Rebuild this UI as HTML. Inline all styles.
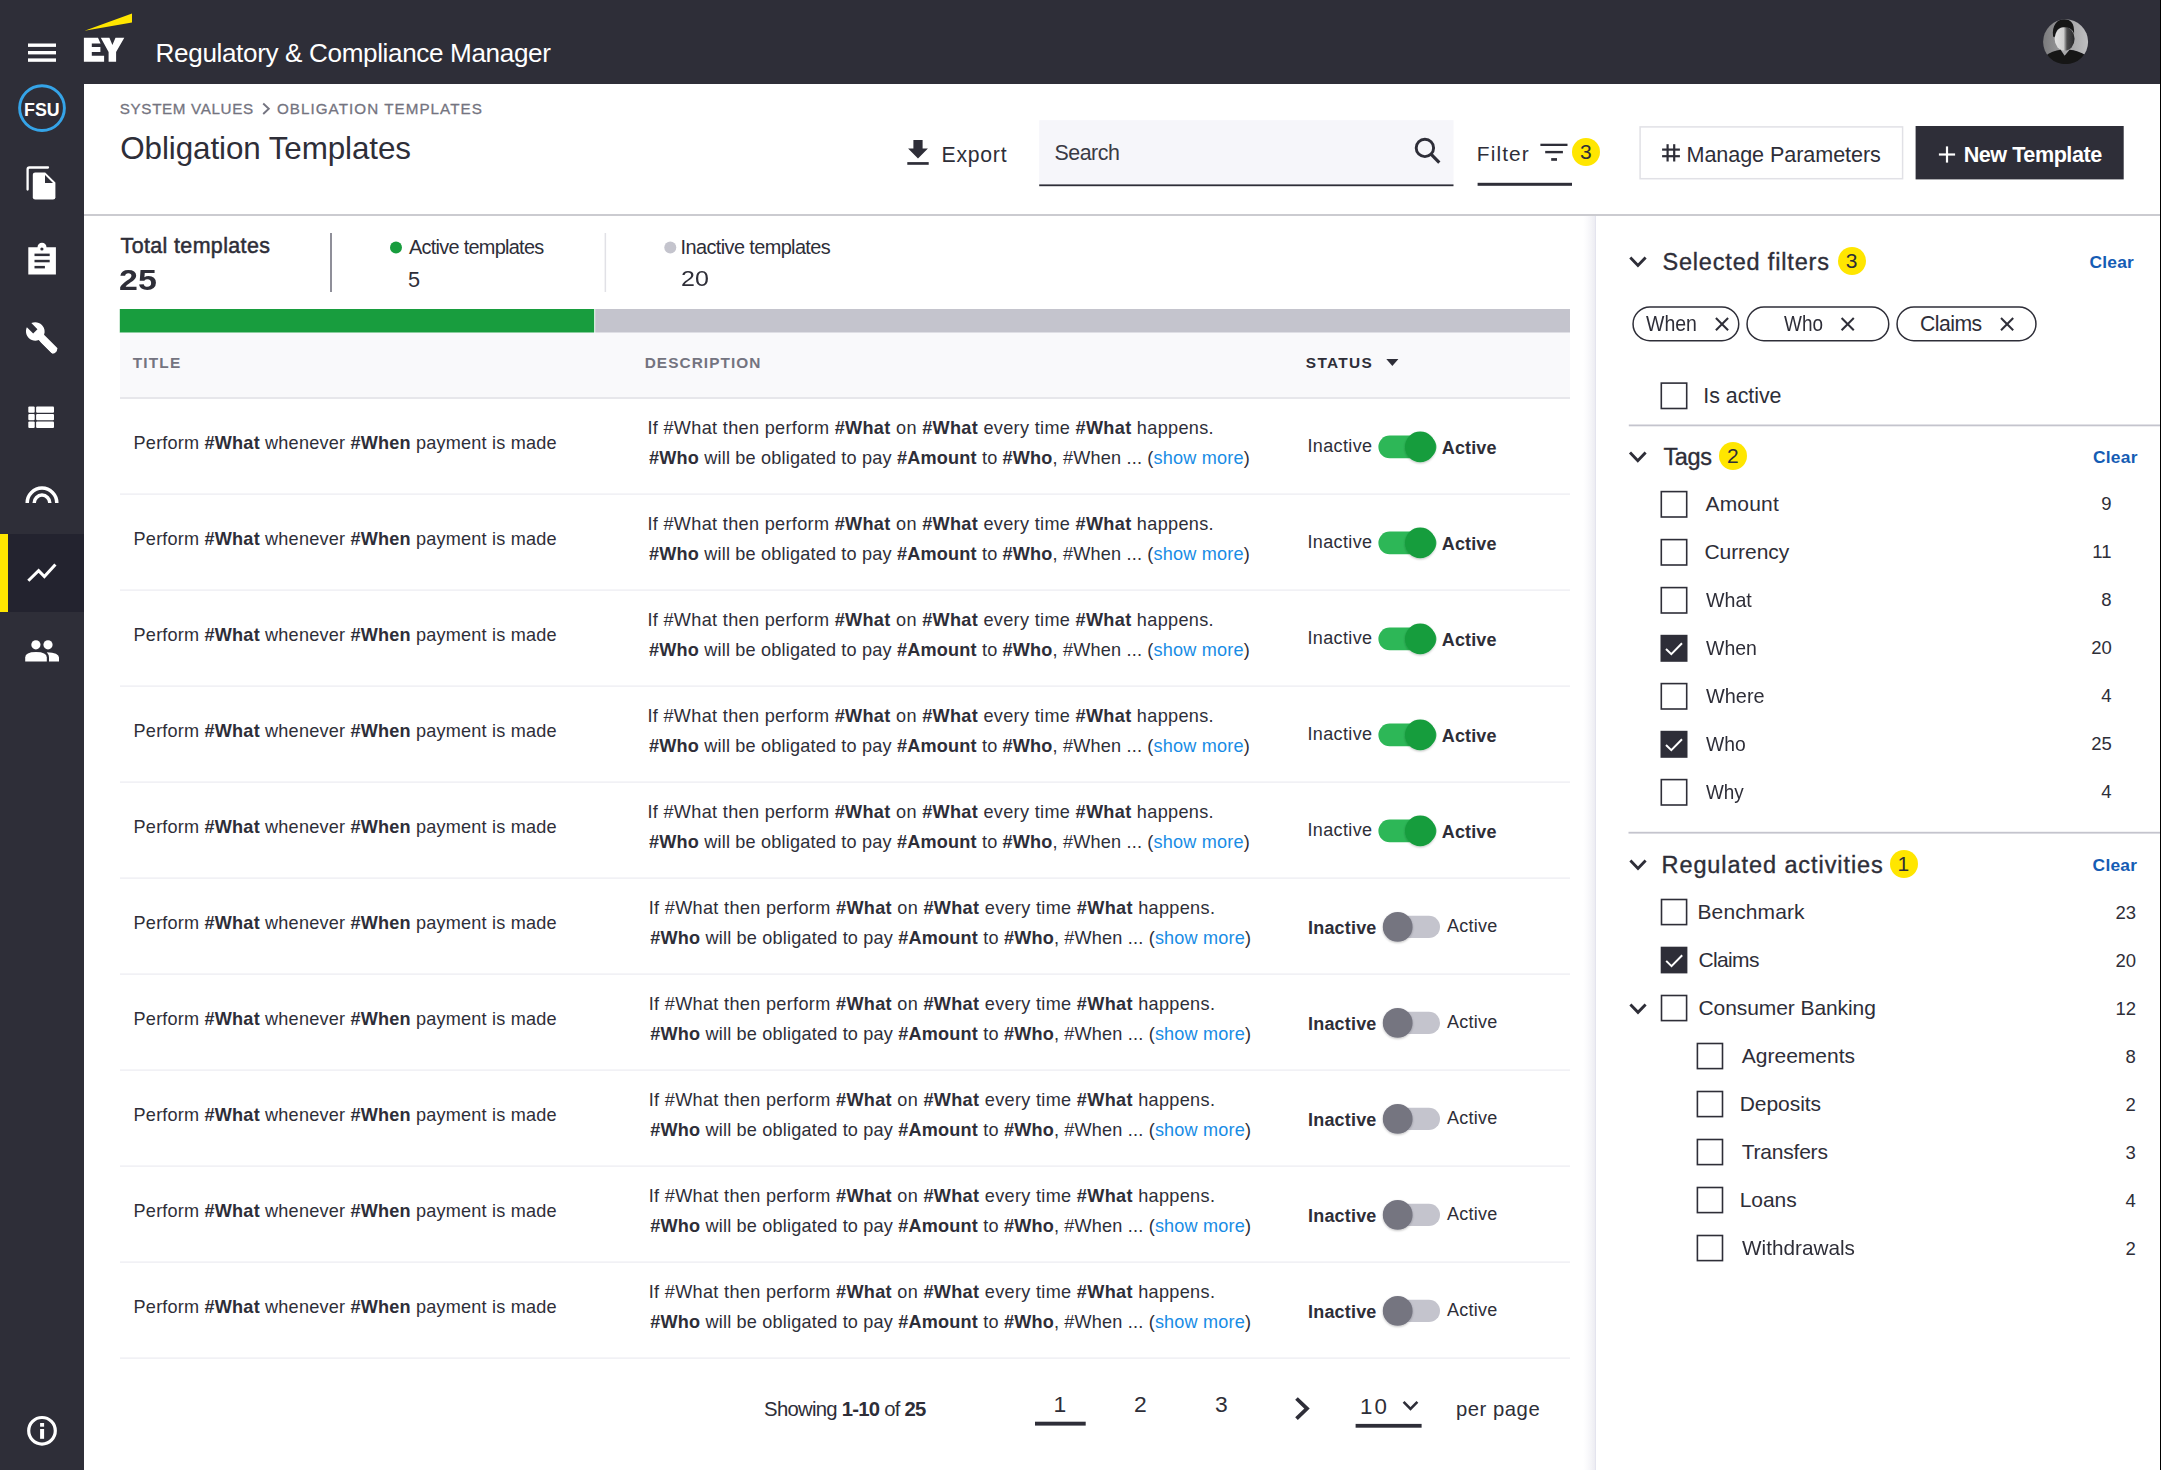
<!DOCTYPE html>
<html><head><meta charset="utf-8"><title>Obligation Templates</title>
<style>
*{margin:0;padding:0;box-sizing:border-box}
html,body{width:2161px;height:1470px;overflow:hidden;background:#fff}
body{font-family:"Liberation Sans",sans-serif;color:#2e2e38;position:relative}
.t{position:absolute;white-space:nowrap;line-height:normal}
b{font-weight:700}
svg{position:absolute;left:0;top:0}
</style></head><body>
<svg width="2161" height="1470" viewBox="0 0 2161 1470"><rect x="0" y="0" width="2161" height="84" fill="#2e2e38"/><rect x="0" y="0" width="84" height="1470" fill="#2e2e38"/><rect x="2160" y="0" width="1" height="1470" fill="#000"/><rect x="84" y="214" width="2076" height="2" fill="#cbcbd0"/><defs><linearGradient id="psh" x1="0" x2="1"><stop offset="0" stop-color="#f4f4f8" stop-opacity="0"/><stop offset="1" stop-color="#ececf2" stop-opacity="1"/></linearGradient></defs><rect x="1583" y="216" width="12" height="1254" fill="url(#psh)"/><rect x="1595" y="216" width="1" height="1254" fill="#e4e4ee"/><rect x="28" y="43.5" width="28" height="3.4" fill="#fff"/><rect x="28" y="51" width="28" height="3.4" fill="#fff"/><rect x="28" y="58.4" width="28" height="3.4" fill="#fff"/><polygon points="84.6,30.8 132,13.6 132,22.5" fill="#ffe600"/><path d="M83.9 37.8 H98 L100.6 43.5 H91.8 V47.1 H100.4 V52 H91.8 V55.7 H104.1 V61.8 H83.9 Z" fill="#fff"/><path d="M100.8 37.8 H109.4 L112.4 45.1 L115.5 37.8 H124.3 L116.1 52 V61.8 H108.6 V52 Z" fill="#fff"/><defs><clipPath id="avc"><circle cx="23" cy="23" r="22.5"/></clipPath>
<linearGradient id="avg" x1="0" x2="1"><stop offset="0" stop-color="#7a7a7c"/><stop offset="0.6" stop-color="#a6a6a8"/><stop offset="1" stop-color="#c0c0c2"/></linearGradient></defs>
<filter id="avb"><feGaussianBlur stdDeviation="0.45"/></filter><g clip-path="url(#avc)" transform="translate(2042.6,18.8)"><g filter="url(#avb)">
<rect width="46" height="46" fill="url(#avg)"/>
<path d="M19 26 L26 26 L27 36 L18 36Z" fill="#a8a8aa"/>
<linearGradient id="fcg" x1="0" x2="1"><stop offset="0" stop-color="#e2e2e2"/><stop offset="0.45" stop-color="#cfcfcf"/><stop offset="0.62" stop-color="#4a4a4c"/><stop offset="1" stop-color="#262628"/></linearGradient><ellipse cx="22" cy="20" rx="10" ry="11.8" fill="url(#fcg)"/>
<path d="M10.5 18 C9 6 15 0.5 21.5 0.5 C28 0.5 32 4 31.5 15 L30 12 C28 9.5 25 8.5 22 8.5 C17 8.5 13.5 10 12.3 18 Z" fill="#141416"/>
<path d="M2 38 C7 33.5 13 31.5 18 31 L22 37 L27 31 C32 31.5 38 33 44 37 V46 H2 Z" fill="#121214"/>
</g></g><circle cx="42" cy="108.1" r="22.4" fill="none" stroke="#35a4e8" stroke-width="2.9"/><text x="41.8" y="115.7" font-family="Liberation Sans" font-weight="700" font-size="17.8" fill="#fff" text-anchor="middle">FSU</text><path d="M48 167.5 H29.5 Q27.6 167.5 27.6 169.5 V189.5" fill="none" stroke="#fff" stroke-width="2.3" stroke-linecap="round"/><path d="M35.2 172.4 H45.2 L55.4 182.5 V197.2 Q55.4 199.6 53 199.6 H35.2 Q32.8 199.6 32.8 197.2 V174.8 Q32.8 172.4 35.2 172.4Z" fill="#fff"/><path d="M45 175 V183 H53Z" fill="#2e2e38"/><path d="M28.3 247.2 H37.5 A4.5 4.5 0 0 1 46.5 247.2 H55.9 V274.4 H28.3Z" fill="#fff"/><circle cx="41.9" cy="249" r="1.6" fill="#2e2e38"/><rect x="34.5" y="253.6" width="15.2" height="2.5" fill="#2e2e38"/><rect x="34.5" y="259.8" width="15.2" height="2.5" fill="#2e2e38"/><rect x="34.5" y="265.9" width="10.4" height="2.5" fill="#2e2e38"/><g transform="translate(24.6,320.6) scale(1.43)"><path d="M22.7 19l-9.1-9.1c.9-2.3.4-5-1.5-6.9-2-2-5-2.4-7.4-1.3L9 6 6 9 1.6 4.7C.4 7.1.9 10.1 2.9 12.1c1.9 1.9 4.6 2.4 6.9 1.5l9.1 9.1c.4.4 1 .4 1.4 0l2.3-2.3c.5-.4.5-1.1.1-1.4z" fill="#fff"/></g><line x1="44" y1="340.6" x2="53.3" y2="349.9" stroke="#fff" stroke-width="7" stroke-linecap="round"/><rect x="28.3" y="406.4" width="6.4" height="6.3" rx="1" fill="#fff"/><rect x="36.1" y="406.4" width="17.9" height="6.3" rx="1" fill="#fff"/><rect x="28.3" y="414.0" width="6.4" height="6.3" rx="1" fill="#fff"/><rect x="36.1" y="414.0" width="17.9" height="6.3" rx="1" fill="#fff"/><rect x="28.3" y="421.6" width="6.4" height="6.3" rx="1" fill="#fff"/><rect x="36.1" y="421.6" width="17.9" height="6.3" rx="1" fill="#fff"/><path d="M27.2 502.9 A14.8 14.8 0 0 1 56.8 502.9" fill="none" stroke="#fff" stroke-width="3.5"/><path d="M34.2 502.9 A7.8 7.8 0 0 1 49.8 502.9" fill="none" stroke="#fff" stroke-width="3.5"/><rect x="0" y="534" width="84" height="78" fill="#23232f"/><rect x="0" y="534" width="8" height="78" fill="#ffe600"/><polyline points="28.3,580.8 38.6,570.6 44.4,576.6 55.4,564.4" fill="none" stroke="#fff" stroke-width="3"/><circle cx="35.9" cy="644.8" r="4.6" fill="#fff"/><circle cx="48" cy="644.8" r="4.6" fill="#fff"/><path d="M25.2 661.6 V657.5 Q25.2 652 36 652 Q46.8 652 46.8 657.5 V661.6Z" fill="#fff"/><path d="M49 661.6 V657.5 Q49 654.5 46.8 652.2 Q59 652.8 59 657.5 V661.6Z" fill="#fff"/><circle cx="42" cy="1430.8" r="13.3" fill="none" stroke="#fff" stroke-width="3.2"/><rect x="40.1" y="1423" width="4" height="3.7" fill="#fff"/><rect x="40.1" y="1429" width="4" height="9.8" fill="#fff"/><polyline points="263.2,103.5 268.8,108.8 263.2,114" fill="none" stroke="#747480" stroke-width="1.9"/><path d="M913.4 140 H922.6 V148.5 H927.9 L918 158.4 L908.1 148.5 H913.4Z" fill="#2e2e38"/><rect x="907.3" y="162.1" width="21.4" height="2.7" fill="#2e2e38"/><rect x="1039.2" y="120.2" width="414.3" height="64.6" fill="#f6f6fa"/><rect x="1039.2" y="184.4" width="414.3" height="1.8" fill="#2e2e38"/><circle cx="1424.9" cy="147.9" r="8.7" fill="none" stroke="#2e2e38" stroke-width="2.9"/><line x1="1431" y1="154.2" x2="1439.3" y2="162.6" stroke="#2e2e38" stroke-width="3.2"/><rect x="1540.4" y="143.7" width="27.1" height="2.3" fill="#2e2e38"/><rect x="1545.2" y="150.9" width="17.7" height="2.4" fill="#2e2e38"/><rect x="1551.2" y="158.1" width="5.8" height="2.7" fill="#2e2e38"/><rect x="1477.6" y="182.8" width="94.4" height="3" fill="#2e2e38"/><rect x="1640.1" y="126.9" width="262.5" height="51.8" fill="#fff" stroke="#e1e1e6" stroke-width="1.5"/><g stroke="#2e2e38" stroke-width="2.2"><line x1="1667.6" y1="144.2" x2="1667.6" y2="161.5"/><line x1="1674.2" y1="144.2" x2="1674.2" y2="161.5"/><line x1="1662.1" y1="149.6" x2="1679.9" y2="149.6"/><line x1="1662.1" y1="156.2" x2="1679.9" y2="156.2"/></g><rect x="1915.6" y="126" width="208.1" height="53.4" fill="#2e2e38"/><g stroke="#fff" stroke-width="2.2"><line x1="1938.9" y1="154.5" x2="1955.1" y2="154.5"/><line x1="1947" y1="146.4" x2="1947" y2="162.6"/></g><rect x="330.2" y="233" width="1.6" height="59" fill="#747480"/><rect x="604.6" y="233" width="1.5" height="59" fill="#e1e1e6"/><circle cx="396" cy="247.4" r="6" fill="#189d3e"/><circle cx="670.3" cy="247.4" r="6" fill="#c4c4cd"/><rect x="119.8" y="309" width="474.4" height="23.7" fill="#189d3e"/><rect x="595.2" y="309" width="974.8" height="23.7" fill="#c4c4cd"/><rect x="120" y="332.7" width="1450" height="64.5" fill="#f9f9fb"/><rect x="120" y="397.2" width="1450" height="1.6" fill="#e1e1e6"/><polygon points="1386.3,359 1398.4,359 1392.35,366" fill="#2e2e38"/><defs><filter id="ksh" x="-50%" y="-50%" width="200%" height="200%"><feDropShadow dx="0" dy="1" stdDeviation="1.2" flood-color="#000" flood-opacity="0.25"/></filter></defs><rect x="120" y="493.5" width="1450" height="1.2" fill="#ececf1"/><rect x="1378.4" y="435.59999999999997" width="58" height="22.6" rx="11.3" fill="#2db757"/><circle cx="1420.2" cy="446.9" r="15.3" fill="#189d3e" filter="url(#ksh)"/><rect x="120" y="589.5" width="1450" height="1.2" fill="#ececf1"/><rect x="1378.4" y="531.6" width="58" height="22.6" rx="11.3" fill="#2db757"/><circle cx="1420.2" cy="542.9" r="15.3" fill="#189d3e" filter="url(#ksh)"/><rect x="120" y="685.5" width="1450" height="1.2" fill="#ececf1"/><rect x="1378.4" y="627.6" width="58" height="22.6" rx="11.3" fill="#2db757"/><circle cx="1420.2" cy="638.9" r="15.3" fill="#189d3e" filter="url(#ksh)"/><rect x="120" y="781.5" width="1450" height="1.2" fill="#ececf1"/><rect x="1378.4" y="723.6" width="58" height="22.6" rx="11.3" fill="#2db757"/><circle cx="1420.2" cy="734.9" r="15.3" fill="#189d3e" filter="url(#ksh)"/><rect x="120" y="877.5" width="1450" height="1.2" fill="#ececf1"/><rect x="1378.4" y="819.6" width="58" height="22.6" rx="11.3" fill="#2db757"/><circle cx="1420.2" cy="830.9" r="15.3" fill="#189d3e" filter="url(#ksh)"/><rect x="120" y="973.5" width="1450" height="1.2" fill="#ececf1"/><rect x="1383" y="915.8" width="57" height="22.2" rx="11.1" fill="#c4c4cd"/><circle cx="1397.7" cy="926.9" r="14.9" fill="#747480" filter="url(#ksh)"/><rect x="120" y="1069.5" width="1450" height="1.2" fill="#ececf1"/><rect x="1383" y="1011.8" width="57" height="22.2" rx="11.1" fill="#c4c4cd"/><circle cx="1397.7" cy="1022.9" r="14.9" fill="#747480" filter="url(#ksh)"/><rect x="120" y="1165.5" width="1450" height="1.2" fill="#ececf1"/><rect x="1383" y="1107.8000000000002" width="57" height="22.2" rx="11.1" fill="#c4c4cd"/><circle cx="1397.7" cy="1118.9" r="14.9" fill="#747480" filter="url(#ksh)"/><rect x="120" y="1261.5" width="1450" height="1.2" fill="#ececf1"/><rect x="1383" y="1203.8000000000002" width="57" height="22.2" rx="11.1" fill="#c4c4cd"/><circle cx="1397.7" cy="1214.9" r="14.9" fill="#747480" filter="url(#ksh)"/><rect x="120" y="1357.5" width="1450" height="1.2" fill="#ececf1"/><rect x="1383" y="1299.8000000000002" width="57" height="22.2" rx="11.1" fill="#c4c4cd"/><circle cx="1397.7" cy="1310.9" r="14.9" fill="#747480" filter="url(#ksh)"/><rect x="1035" y="1421.7" width="50.7" height="3.9" fill="#2e2e38"/><polyline points="1296.5,1398.5 1307,1408.6 1296.5,1418.7" fill="none" stroke="#2e2e38" stroke-width="3.8"/><polyline points="1403.6,1401.8 1410.5,1408.8 1417.4,1401.8" fill="none" stroke="#2e2e38" stroke-width="2.6"/><rect x="1355.6" y="1423.9" width="66" height="3.8" fill="#2e2e38"/><polyline points="1630.3,257.4 1637.9499999999998,265.4 1645.6,257.4" fill="none" stroke="#2e2e38" stroke-width="2.9"/><polyline points="1630.0,452.4 1637.8,460.7 1645.6,452.4" fill="none" stroke="#2e2e38" stroke-width="2.9"/><polyline points="1630.4,860.6 1638.0,868.4000000000001 1645.6,860.6" fill="none" stroke="#2e2e38" stroke-width="2.9"/><polyline points="1630.4,1004.5 1638.0,1012.3000000000001 1645.6,1004.5" fill="none" stroke="#2e2e38" stroke-width="2.9"/><rect x="1633.05" y="307.05" width="105.70000000000005" height="33.7" rx="16.85" fill="none" stroke="#2e2e38" stroke-width="1.5"/><g stroke="#2e2e38" stroke-width="2"><line x1="1715.9" y1="318" x2="1728.1000000000001" y2="330.2"/><line x1="1728.1000000000001" y1="318" x2="1715.9" y2="330.2"/></g><rect x="1747.05" y="307.05" width="141.70000000000005" height="33.7" rx="16.85" fill="none" stroke="#2e2e38" stroke-width="1.5"/><g stroke="#2e2e38" stroke-width="2"><line x1="1841.6000000000001" y1="318" x2="1853.8000000000002" y2="330.2"/><line x1="1853.8000000000002" y1="318" x2="1841.6000000000001" y2="330.2"/></g><rect x="1897.05" y="307.05" width="138.9000000000001" height="33.7" rx="16.85" fill="none" stroke="#2e2e38" stroke-width="1.5"/><g stroke="#2e2e38" stroke-width="2"><line x1="2001.0" y1="318" x2="2013.2" y2="330.2"/><line x1="2013.2" y1="318" x2="2001.0" y2="330.2"/></g><rect x="1661.3" y="383.1" width="25.4" height="25.4" fill="none" stroke="#2e2e38" stroke-width="1.6"/><rect x="1628.8" y="424.5" width="531.2" height="1.8" fill="#c4c4cd"/><rect x="1661.3" y="491.6" width="25.4" height="25.4" fill="none" stroke="#2e2e38" stroke-width="1.6"/><rect x="1661.3" y="539.5999999999999" width="25.4" height="25.4" fill="none" stroke="#2e2e38" stroke-width="1.6"/><rect x="1661.3" y="587.5999999999999" width="25.4" height="25.4" fill="none" stroke="#2e2e38" stroke-width="1.6"/><rect x="1660.5" y="634.8" width="27.0" height="27.0" fill="#2e2e38"/><polyline points="1666.0,649.0 1671.3,654.1999999999999 1682.0,643.3" fill="none" stroke="#fff" stroke-width="2"/><rect x="1661.3" y="683.5999999999999" width="25.4" height="25.4" fill="none" stroke="#2e2e38" stroke-width="1.6"/><rect x="1660.5" y="730.8" width="27.0" height="27.0" fill="#2e2e38"/><polyline points="1666.0,745.0 1671.3,750.1999999999999 1682.0,739.3" fill="none" stroke="#fff" stroke-width="2"/><rect x="1661.3" y="779.5999999999999" width="25.4" height="25.4" fill="none" stroke="#2e2e38" stroke-width="1.6"/><rect x="1628.5" y="831.8" width="531.5" height="1.8" fill="#c4c4cd"/><rect x="1661.5" y="899.5" width="25.099999999999998" height="25.099999999999998" fill="none" stroke="#2e2e38" stroke-width="1.6"/><rect x="1660.7" y="946.7" width="26.7" height="26.7" fill="#2e2e38"/><polyline points="1666.2,960.9000000000001 1671.5,966.1 1682.2,955.2" fill="none" stroke="#fff" stroke-width="2"/><rect x="1661.5" y="995.5" width="25.099999999999998" height="25.099999999999998" fill="none" stroke="#2e2e38" stroke-width="1.6"/><rect x="1697.3999999999999" y="1043.5" width="25.099999999999998" height="25.099999999999998" fill="none" stroke="#2e2e38" stroke-width="1.6"/><rect x="1697.3999999999999" y="1091.5" width="25.099999999999998" height="25.099999999999998" fill="none" stroke="#2e2e38" stroke-width="1.6"/><rect x="1697.3999999999999" y="1139.5" width="25.099999999999998" height="25.099999999999998" fill="none" stroke="#2e2e38" stroke-width="1.6"/><rect x="1697.3999999999999" y="1187.5" width="25.099999999999998" height="25.099999999999998" fill="none" stroke="#2e2e38" stroke-width="1.6"/><rect x="1697.3999999999999" y="1235.5" width="25.099999999999998" height="25.099999999999998" fill="none" stroke="#2e2e38" stroke-width="1.6"/></svg>
<div style="position:absolute;left:1571.6999999999998px;top:137.7px;width:28.8px;height:28.8px;border-radius:50%;background:#ffe600"></div>
<div style="position:absolute;left:1837.5px;top:246.7px;width:28.4px;height:28.4px;border-radius:50%;background:#ffe600"></div>
<div style="position:absolute;left:1718.6999999999998px;top:441.5px;width:28.8px;height:28.8px;border-radius:50%;background:#ffe600"></div>
<div style="position:absolute;left:1889.7px;top:849.8px;width:28.4px;height:28.4px;border-radius:50%;background:#ffe600"></div>
<div class="t" style="left:155.60px;top:37.56px;font-size:26.1px;color:#fff;letter-spacing:-0.360px">Regulatory &amp; Compliance Manager</div>
<div class="t" style="left:119.80px;top:100.00px;font-size:15.2px;color:#747480;letter-spacing:0.650px;-webkit-text-stroke:0.3px #747480">SYSTEM VALUES</div>
<div class="t" style="left:276.90px;top:100.00px;font-size:15.2px;color:#747480;letter-spacing:1.058px;-webkit-text-stroke:0.3px #747480">OBLIGATION TEMPLATES</div>
<div class="t" style="left:120.20px;top:130.58px;font-size:31.4px;color:#2e2e38;letter-spacing:-0.089px">Obligation Templates</div>
<div class="t" style="left:941.50px;top:142.57px;font-size:21.2px;color:#2e2e38;letter-spacing:0.760px">Export</div>
<div class="t" style="left:1054.50px;top:140.69px;font-size:21.4px;color:#3a3a44;letter-spacing:-0.500px">Search</div>
<div class="t" style="left:1476.80px;top:141.85px;font-size:20.9px;color:#2e2e38;letter-spacing:1.120px">Filter</div>
<div class="t" style="left:1686.50px;top:142.31px;font-size:21.6px;color:#2e2e38;letter-spacing:-0.081px">Manage Parameters</div>
<div class="t" style="left:1963.70px;top:142.31px;font-size:21.6px;color:#fff;font-weight:700;letter-spacing:-0.464px">New Template</div>
<div class="t" style="left:120.60px;top:234.39px;font-size:21.4px;color:#2e2e38;letter-spacing:0.386px;-webkit-text-stroke:0.5px #2e2e38">Total templates</div>
<div class="t" style="left:119.45px;top:263.22px;font-size:29.4px;color:#2e2e38;font-weight:700;transform:scaleX(1.1548);transform-origin:0 0">25</div>
<div class="t" style="left:409.00px;top:235.77px;font-size:19.9px;color:#2e2e38;letter-spacing:-0.713px">Active templates</div>
<div class="t" style="left:408.00px;top:266.81px;font-size:21.7px;color:#2e2e38;letter-spacing:1.200px">5</div>
<div class="t" style="left:680.60px;top:235.77px;font-size:19.9px;color:#2e2e38;letter-spacing:-0.600px">Inactive templates</div>
<div class="t" style="left:681.45px;top:265.81px;font-size:21.7px;color:#2e2e38;transform:scaleX(1.1545);transform-origin:0 0">20</div>
<div class="t" style="left:132.70px;top:353.52px;font-size:15.4px;color:#747480;font-weight:700;letter-spacing:1.200px">TITLE</div>
<div class="t" style="left:644.70px;top:353.52px;font-size:15.4px;color:#747480;font-weight:700;letter-spacing:1.060px">DESCRIPTION</div>
<div class="t" style="left:1305.80px;top:353.52px;font-size:15.4px;color:#2e2e38;font-weight:700;letter-spacing:1.340px">STATUS</div>
<div class="t" style="left:133.60px;top:432.53px;font-size:18.1px;color:#2e2e38;letter-spacing:0.200px">Perform <b>#What</b> whenever <b>#When</b> payment is made</div>
<div class="t" style="left:647.40px;top:417.63px;font-size:18.1px;color:#2e2e38;letter-spacing:0.331px">If #What then perform <b>#What</b> on <b>#What</b> every time <b>#What</b> happens.</div>
<div class="t" style="left:649.00px;top:448.13px;font-size:18.1px;color:#2e2e38;letter-spacing:0.187px"><b>#Who</b> will be obligated to pay <b>#Amount</b> to <b>#Who</b>, #When ... (<span style="color:#188ce5">show more</span>)</div>
<div class="t" style="left:1307.40px;top:436.22px;font-size:18.0px;color:#2e2e38;letter-spacing:0.386px">Inactive</div>
<div class="t" style="left:1441.80px;top:437.72px;font-size:18.0px;color:#2e2e38;font-weight:700;letter-spacing:0.140px">Active</div>
<div class="t" style="left:133.60px;top:528.53px;font-size:18.1px;color:#2e2e38;letter-spacing:0.200px">Perform <b>#What</b> whenever <b>#When</b> payment is made</div>
<div class="t" style="left:647.40px;top:513.63px;font-size:18.1px;color:#2e2e38;letter-spacing:0.331px">If #What then perform <b>#What</b> on <b>#What</b> every time <b>#What</b> happens.</div>
<div class="t" style="left:649.00px;top:544.13px;font-size:18.1px;color:#2e2e38;letter-spacing:0.187px"><b>#Who</b> will be obligated to pay <b>#Amount</b> to <b>#Who</b>, #When ... (<span style="color:#188ce5">show more</span>)</div>
<div class="t" style="left:1307.40px;top:532.22px;font-size:18.0px;color:#2e2e38;letter-spacing:0.386px">Inactive</div>
<div class="t" style="left:1441.80px;top:533.72px;font-size:18.0px;color:#2e2e38;font-weight:700;letter-spacing:0.140px">Active</div>
<div class="t" style="left:133.60px;top:624.53px;font-size:18.1px;color:#2e2e38;letter-spacing:0.200px">Perform <b>#What</b> whenever <b>#When</b> payment is made</div>
<div class="t" style="left:647.40px;top:609.63px;font-size:18.1px;color:#2e2e38;letter-spacing:0.331px">If #What then perform <b>#What</b> on <b>#What</b> every time <b>#What</b> happens.</div>
<div class="t" style="left:649.00px;top:640.13px;font-size:18.1px;color:#2e2e38;letter-spacing:0.187px"><b>#Who</b> will be obligated to pay <b>#Amount</b> to <b>#Who</b>, #When ... (<span style="color:#188ce5">show more</span>)</div>
<div class="t" style="left:1307.40px;top:628.22px;font-size:18.0px;color:#2e2e38;letter-spacing:0.386px">Inactive</div>
<div class="t" style="left:1441.80px;top:629.72px;font-size:18.0px;color:#2e2e38;font-weight:700;letter-spacing:0.140px">Active</div>
<div class="t" style="left:133.60px;top:720.53px;font-size:18.1px;color:#2e2e38;letter-spacing:0.200px">Perform <b>#What</b> whenever <b>#When</b> payment is made</div>
<div class="t" style="left:647.40px;top:705.63px;font-size:18.1px;color:#2e2e38;letter-spacing:0.331px">If #What then perform <b>#What</b> on <b>#What</b> every time <b>#What</b> happens.</div>
<div class="t" style="left:649.00px;top:736.13px;font-size:18.1px;color:#2e2e38;letter-spacing:0.187px"><b>#Who</b> will be obligated to pay <b>#Amount</b> to <b>#Who</b>, #When ... (<span style="color:#188ce5">show more</span>)</div>
<div class="t" style="left:1307.40px;top:724.22px;font-size:18.0px;color:#2e2e38;letter-spacing:0.386px">Inactive</div>
<div class="t" style="left:1441.80px;top:725.72px;font-size:18.0px;color:#2e2e38;font-weight:700;letter-spacing:0.140px">Active</div>
<div class="t" style="left:133.60px;top:816.53px;font-size:18.1px;color:#2e2e38;letter-spacing:0.200px">Perform <b>#What</b> whenever <b>#When</b> payment is made</div>
<div class="t" style="left:647.40px;top:801.63px;font-size:18.1px;color:#2e2e38;letter-spacing:0.331px">If #What then perform <b>#What</b> on <b>#What</b> every time <b>#What</b> happens.</div>
<div class="t" style="left:649.00px;top:832.13px;font-size:18.1px;color:#2e2e38;letter-spacing:0.187px"><b>#Who</b> will be obligated to pay <b>#Amount</b> to <b>#Who</b>, #When ... (<span style="color:#188ce5">show more</span>)</div>
<div class="t" style="left:1307.40px;top:820.22px;font-size:18.0px;color:#2e2e38;letter-spacing:0.386px">Inactive</div>
<div class="t" style="left:1441.80px;top:821.72px;font-size:18.0px;color:#2e2e38;font-weight:700;letter-spacing:0.140px">Active</div>
<div class="t" style="left:133.60px;top:912.53px;font-size:18.1px;color:#2e2e38;letter-spacing:0.200px">Perform <b>#What</b> whenever <b>#When</b> payment is made</div>
<div class="t" style="left:648.70px;top:897.63px;font-size:18.1px;color:#2e2e38;letter-spacing:0.331px">If #What then perform <b>#What</b> on <b>#What</b> every time <b>#What</b> happens.</div>
<div class="t" style="left:650.30px;top:928.13px;font-size:18.1px;color:#2e2e38;letter-spacing:0.187px"><b>#Who</b> will be obligated to pay <b>#Amount</b> to <b>#Who</b>, #When ... (<span style="color:#188ce5">show more</span>)</div>
<div class="t" style="left:1308.10px;top:917.72px;font-size:18.0px;color:#2e2e38;font-weight:700;letter-spacing:0.171px">Inactive</div>
<div class="t" style="left:1447.00px;top:916.22px;font-size:18.0px;color:#2e2e38;letter-spacing:0.260px">Active</div>
<div class="t" style="left:133.60px;top:1008.53px;font-size:18.1px;color:#2e2e38;letter-spacing:0.200px">Perform <b>#What</b> whenever <b>#When</b> payment is made</div>
<div class="t" style="left:648.70px;top:993.63px;font-size:18.1px;color:#2e2e38;letter-spacing:0.331px">If #What then perform <b>#What</b> on <b>#What</b> every time <b>#What</b> happens.</div>
<div class="t" style="left:650.30px;top:1024.13px;font-size:18.1px;color:#2e2e38;letter-spacing:0.187px"><b>#Who</b> will be obligated to pay <b>#Amount</b> to <b>#Who</b>, #When ... (<span style="color:#188ce5">show more</span>)</div>
<div class="t" style="left:1308.10px;top:1013.72px;font-size:18.0px;color:#2e2e38;font-weight:700;letter-spacing:0.171px">Inactive</div>
<div class="t" style="left:1447.00px;top:1012.22px;font-size:18.0px;color:#2e2e38;letter-spacing:0.260px">Active</div>
<div class="t" style="left:133.60px;top:1104.53px;font-size:18.1px;color:#2e2e38;letter-spacing:0.200px">Perform <b>#What</b> whenever <b>#When</b> payment is made</div>
<div class="t" style="left:648.70px;top:1089.63px;font-size:18.1px;color:#2e2e38;letter-spacing:0.331px">If #What then perform <b>#What</b> on <b>#What</b> every time <b>#What</b> happens.</div>
<div class="t" style="left:650.30px;top:1120.13px;font-size:18.1px;color:#2e2e38;letter-spacing:0.187px"><b>#Who</b> will be obligated to pay <b>#Amount</b> to <b>#Who</b>, #When ... (<span style="color:#188ce5">show more</span>)</div>
<div class="t" style="left:1308.10px;top:1109.72px;font-size:18.0px;color:#2e2e38;font-weight:700;letter-spacing:0.171px">Inactive</div>
<div class="t" style="left:1447.00px;top:1108.22px;font-size:18.0px;color:#2e2e38;letter-spacing:0.260px">Active</div>
<div class="t" style="left:133.60px;top:1200.53px;font-size:18.1px;color:#2e2e38;letter-spacing:0.200px">Perform <b>#What</b> whenever <b>#When</b> payment is made</div>
<div class="t" style="left:648.70px;top:1185.63px;font-size:18.1px;color:#2e2e38;letter-spacing:0.331px">If #What then perform <b>#What</b> on <b>#What</b> every time <b>#What</b> happens.</div>
<div class="t" style="left:650.30px;top:1216.13px;font-size:18.1px;color:#2e2e38;letter-spacing:0.187px"><b>#Who</b> will be obligated to pay <b>#Amount</b> to <b>#Who</b>, #When ... (<span style="color:#188ce5">show more</span>)</div>
<div class="t" style="left:1308.10px;top:1205.72px;font-size:18.0px;color:#2e2e38;font-weight:700;letter-spacing:0.171px">Inactive</div>
<div class="t" style="left:1447.00px;top:1204.22px;font-size:18.0px;color:#2e2e38;letter-spacing:0.260px">Active</div>
<div class="t" style="left:133.60px;top:1296.53px;font-size:18.1px;color:#2e2e38;letter-spacing:0.200px">Perform <b>#What</b> whenever <b>#When</b> payment is made</div>
<div class="t" style="left:648.70px;top:1281.63px;font-size:18.1px;color:#2e2e38;letter-spacing:0.331px">If #What then perform <b>#What</b> on <b>#What</b> every time <b>#What</b> happens.</div>
<div class="t" style="left:650.30px;top:1312.13px;font-size:18.1px;color:#2e2e38;letter-spacing:0.187px"><b>#Who</b> will be obligated to pay <b>#Amount</b> to <b>#Who</b>, #When ... (<span style="color:#188ce5">show more</span>)</div>
<div class="t" style="left:1308.10px;top:1301.72px;font-size:18.0px;color:#2e2e38;font-weight:700;letter-spacing:0.171px">Inactive</div>
<div class="t" style="left:1447.00px;top:1300.22px;font-size:18.0px;color:#2e2e38;letter-spacing:0.260px">Active</div>
<div class="t" style="left:764.10px;top:1397.90px;font-size:20.3px;color:#2e2e38;letter-spacing:-0.735px">Showing <b>1-10</b> of <b>25</b></div>
<div class="t" style="left:1053.50px;top:1391.31px;font-size:22.9px;color:#2e2e38">1</div>
<div class="t" style="left:1134.00px;top:1391.31px;font-size:22.9px;color:#2e2e38">2</div>
<div class="t" style="left:1215.00px;top:1391.31px;font-size:22.9px;color:#2e2e38">3</div>
<div class="t" style="left:1360.00px;top:1394.46px;font-size:22.3px;color:#2e2e38;letter-spacing:2.200px">10</div>
<div class="t" style="left:1456.00px;top:1397.90px;font-size:20.3px;color:#2e2e38;letter-spacing:0.514px">per page</div>
<div class="t" style="left:1662.40px;top:249.06px;font-size:23.5px;color:#2e2e38;letter-spacing:0.833px;-webkit-text-stroke:0.35px #2e2e38">Selected filters</div>
<div class="t" style="left:2089.40px;top:252.27px;font-size:17.4px;color:#155cb4;font-weight:700;letter-spacing:0.225px">Clear</div>
<div class="t" style="left:1645.70px;top:311.97px;font-size:21.2px;color:#2e2e38;transform:scaleX(0.9204);transform-origin:0 0">When</div>
<div class="t" style="left:1783.90px;top:311.97px;font-size:21.2px;color:#2e2e38;transform:scaleX(0.8953);transform-origin:0 0">Who</div>
<div class="t" style="left:1920.00px;top:311.97px;font-size:21.2px;color:#2e2e38;letter-spacing:-0.520px">Claims</div>
<div class="t" style="left:1703.30px;top:384.29px;font-size:21.4px;color:#2e2e38;letter-spacing:-0.037px">Is active</div>
<div class="t" style="left:1663.40px;top:443.56px;font-size:23.5px;color:#2e2e38;letter-spacing:-0.367px;-webkit-text-stroke:0.35px #2e2e38">Tags</div>
<div class="t" style="left:2093.00px;top:447.37px;font-size:17.4px;color:#155cb4;font-weight:700;letter-spacing:0.225px">Clear</div>
<div class="t" style="left:1705.50px;top:492.16px;font-size:21.0px;color:#2e2e38;letter-spacing:0.180px">Amount</div>
<div class="t" style="left:2101.30px;top:493.26px;font-size:18.5px;color:#2e2e38">9</div>
<div class="t" style="left:1704.50px;top:540.16px;font-size:21.0px;color:#2e2e38;letter-spacing:-0.071px">Currency</div>
<div class="t" style="left:2092.30px;top:541.26px;font-size:18.5px;color:#2e2e38">11</div>
<div class="t" style="left:1705.50px;top:588.16px;font-size:21.0px;color:#2e2e38;transform:scaleX(0.9347);transform-origin:0 0">What</div>
<div class="t" style="left:2101.30px;top:589.26px;font-size:18.5px;color:#2e2e38">8</div>
<div class="t" style="left:1705.50px;top:636.16px;font-size:21.0px;color:#2e2e38;transform:scaleX(0.9278);transform-origin:0 0">When</div>
<div class="t" style="left:2091.30px;top:637.26px;font-size:18.5px;color:#2e2e38">20</div>
<div class="t" style="left:1705.50px;top:684.16px;font-size:21.0px;color:#2e2e38;transform:scaleX(0.9475);transform-origin:0 0">Where</div>
<div class="t" style="left:2101.30px;top:685.26px;font-size:18.5px;color:#2e2e38">4</div>
<div class="t" style="left:1705.50px;top:732.16px;font-size:21.0px;color:#2e2e38;transform:scaleX(0.9186);transform-origin:0 0">Who</div>
<div class="t" style="left:2091.30px;top:733.26px;font-size:18.5px;color:#2e2e38">25</div>
<div class="t" style="left:1705.50px;top:780.16px;font-size:21.0px;color:#2e2e38;transform:scaleX(0.9000);transform-origin:0 0">Why</div>
<div class="t" style="left:2101.30px;top:781.26px;font-size:18.5px;color:#2e2e38">4</div>
<div class="t" style="left:1661.50px;top:851.56px;font-size:23.5px;color:#2e2e38;letter-spacing:0.921px;-webkit-text-stroke:0.35px #2e2e38">Regulated activities</div>
<div class="t" style="left:2092.60px;top:855.37px;font-size:17.4px;color:#155cb4;font-weight:700;letter-spacing:0.225px">Clear</div>
<div class="t" style="left:1697.50px;top:900.46px;font-size:21.0px;color:#2e2e38;letter-spacing:0.100px">Benchmark</div>
<div class="t" style="left:2115.50px;top:901.56px;font-size:18.5px;color:#2e2e38">23</div>
<div class="t" style="left:1698.50px;top:948.46px;font-size:21.0px;color:#2e2e38;letter-spacing:-0.640px">Claims</div>
<div class="t" style="left:2115.50px;top:949.56px;font-size:18.5px;color:#2e2e38">20</div>
<div class="t" style="left:1698.50px;top:996.46px;font-size:21.0px;color:#2e2e38;letter-spacing:-0.080px">Consumer Banking</div>
<div class="t" style="left:2115.50px;top:997.56px;font-size:18.5px;color:#2e2e38">12</div>
<div class="t" style="left:1741.70px;top:1044.46px;font-size:21.0px;color:#2e2e38;letter-spacing:0.022px">Agreements</div>
<div class="t" style="left:2125.50px;top:1045.56px;font-size:18.5px;color:#2e2e38">8</div>
<div class="t" style="left:1739.70px;top:1092.46px;font-size:21.0px;color:#2e2e38;letter-spacing:-0.043px">Deposits</div>
<div class="t" style="left:2125.50px;top:1093.56px;font-size:18.5px;color:#2e2e38">2</div>
<div class="t" style="left:1741.70px;top:1140.46px;font-size:21.0px;color:#2e2e38;letter-spacing:-0.213px">Transfers</div>
<div class="t" style="left:2125.50px;top:1141.56px;font-size:18.5px;color:#2e2e38">3</div>
<div class="t" style="left:1739.70px;top:1188.46px;font-size:21.0px;color:#2e2e38;letter-spacing:-0.050px">Loans</div>
<div class="t" style="left:2125.50px;top:1189.56px;font-size:18.5px;color:#2e2e38">4</div>
<div class="t" style="left:1741.70px;top:1236.46px;font-size:21.0px;color:#2e2e38;transform:scaleX(0.9877);transform-origin:0 0">Withdrawals</div>
<div class="t" style="left:2125.50px;top:1237.56px;font-size:18.5px;color:#2e2e38">2</div>
<div class="t" style="left:1580.10px;top:140.36px;font-size:21px;color:#2e2e38">3</div>
<div class="t" style="left:1845.70px;top:249.16px;font-size:21px;color:#2e2e38">3</div>
<div class="t" style="left:1727.10px;top:444.16px;font-size:21px;color:#2e2e38">2</div>
<div class="t" style="left:1897.40px;top:852.26px;font-size:21px;color:#2e2e38">1</div>
</body></html>
